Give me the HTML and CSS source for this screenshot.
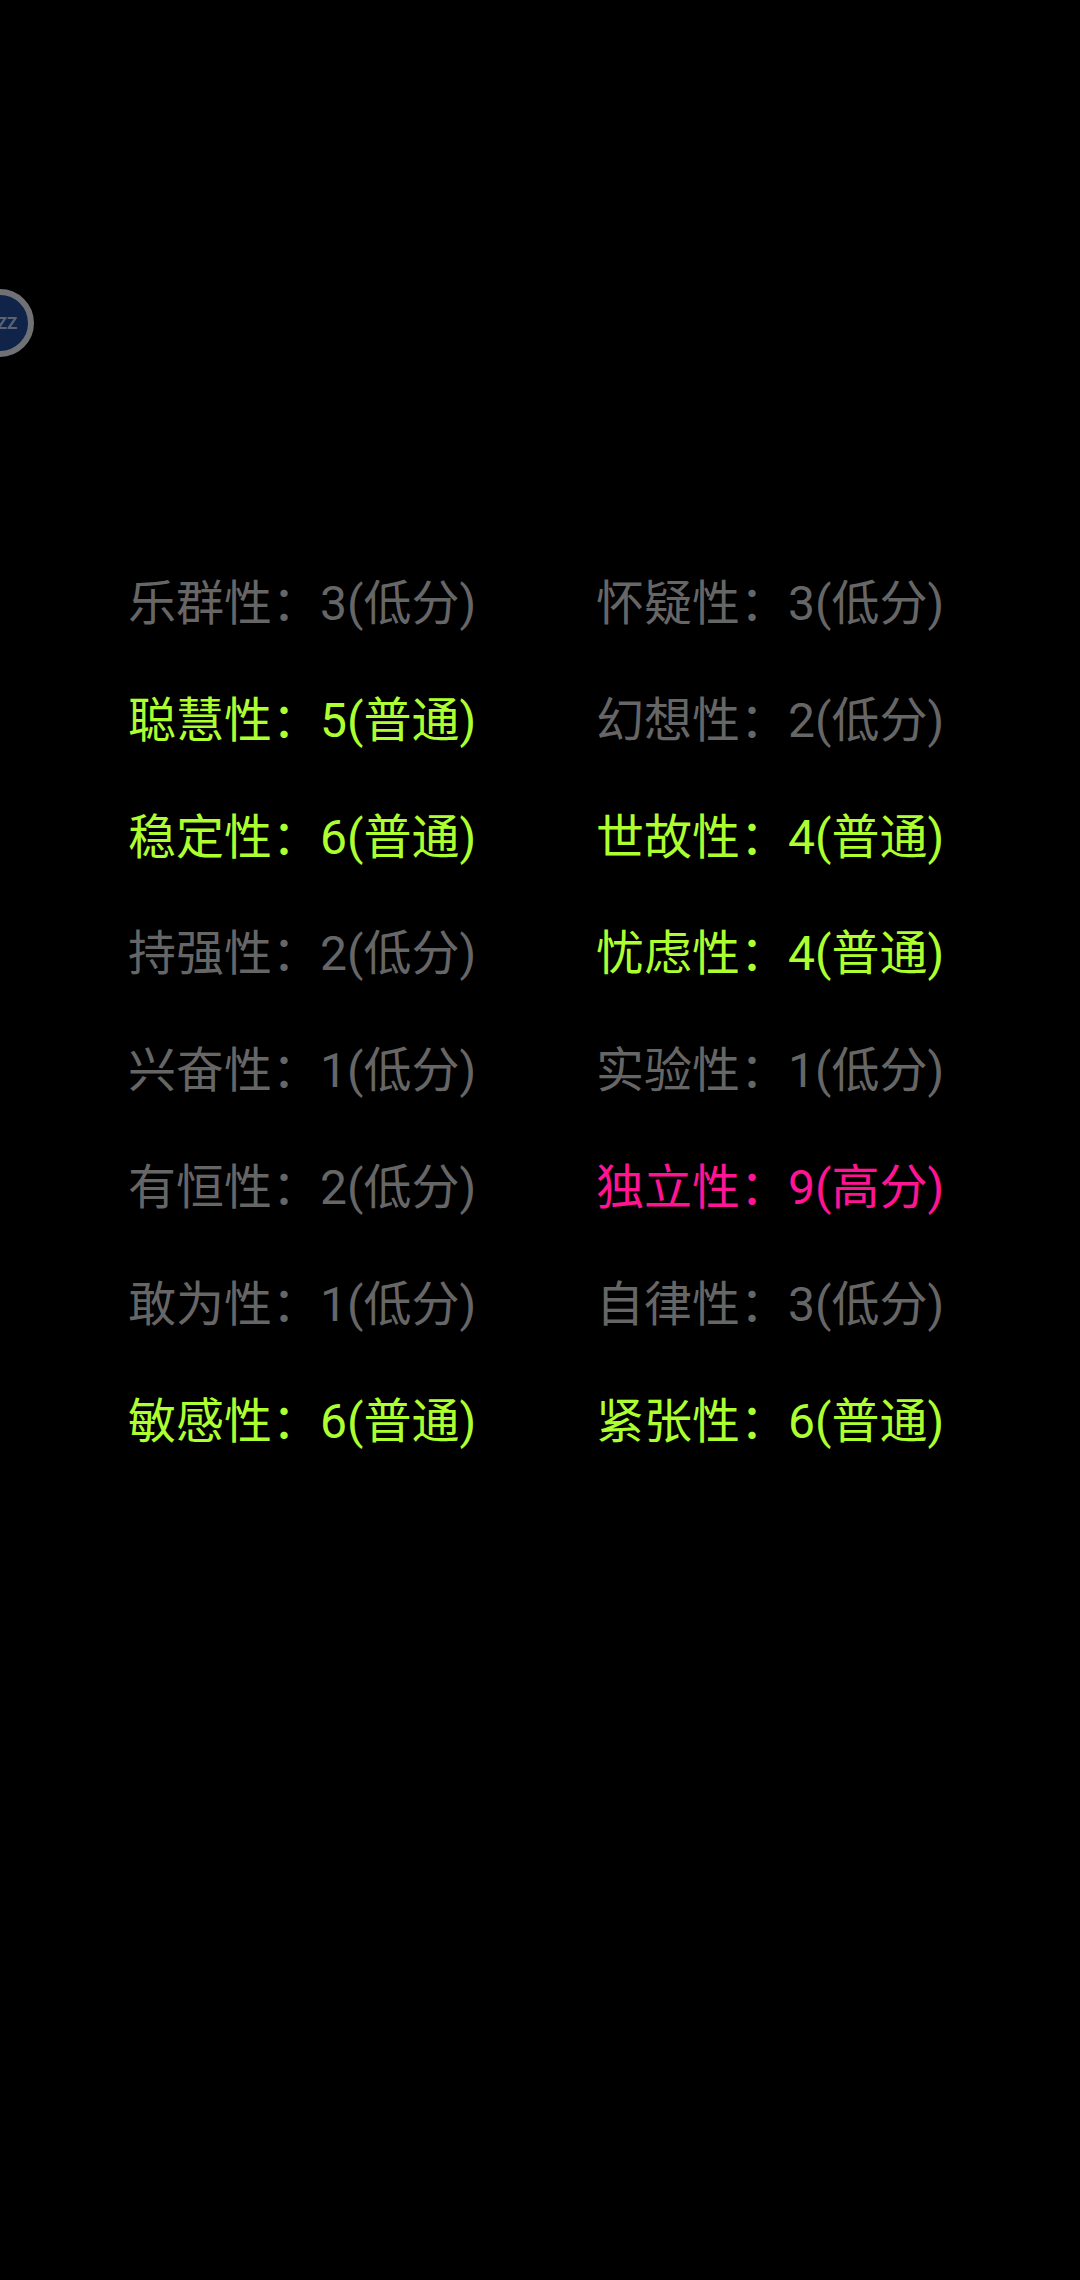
FILE: index.html
```html
<!DOCTYPE html>
<html lang="zh-CN">
<head>
    <meta charset="UTF-8">
    <meta name="viewport" content="width=device-width, initial-scale=1.0">
    <title>16PF</title>
    <link rel="stylesheet" href="styles.css">
</head>
<body>
    <div class="float-ball"><span>ZZ</span></div>
    <div class="result-grid">
        <p class="low">乐群性：3(低分)</p>
        <p class="low">怀疑性：3(低分)</p>
        <p class="normal">聪慧性：5(普通)</p>
        <p class="low">幻想性：2(低分)</p>
        <p class="normal">稳定性：6(普通)</p>
        <p class="normal">世故性：4(普通)</p>
        <p class="low">持强性：2(低分)</p>
        <p class="normal">忧虑性：4(普通)</p>
        <p class="low">兴奋性：1(低分)</p>
        <p class="low">实验性：1(低分)</p>
        <p class="low">有恒性：2(低分)</p>
        <p class="high">独立性：9(高分)</p>
        <p class="low">敢为性：1(低分)</p>
        <p class="low">自律性：3(低分)</p>
        <p class="normal">敏感性：6(普通)</p>
        <p class="normal">紧张性：6(普通)</p>
    </div>
</body>
</html>
```

FILE: styles.css
```css
html, body {
    margin: 0;
    padding: 0;
    height: 2280px;
    overflow: hidden;
    background-color: #000;
    font-family: "Roboto", "Noto Sans CJK SC", sans-serif;
}
.float-ball {
    position: absolute;
    left: -34px;
    top: 289px;
    width: 68px;
    height: 68px;
    box-sizing: border-box;
    display: flex;
    justify-content: center;
    align-items: center;
    border: 6px solid #6f7174;
    border-radius: 50%;
    background-color: #0f2448;
    color: #596375;
    font-size: 17px;
    font-weight: bold;
}
.float-ball span {
    margin-left: 14px;
}
.result-grid {
    display: grid;
    grid-template-columns: 468px 1fr;
    grid-auto-rows: 116.8px;
    padding: 546px 0 0 128px;
}
.result-grid p {
    margin: 0;
    font-size: 48px;
    line-height: 116.8px;
    white-space: nowrap;
}
.low {
    color: #666;
}
.normal {
    color: #adff2f;
}
.high {
    color: #ff1493;
}
```
